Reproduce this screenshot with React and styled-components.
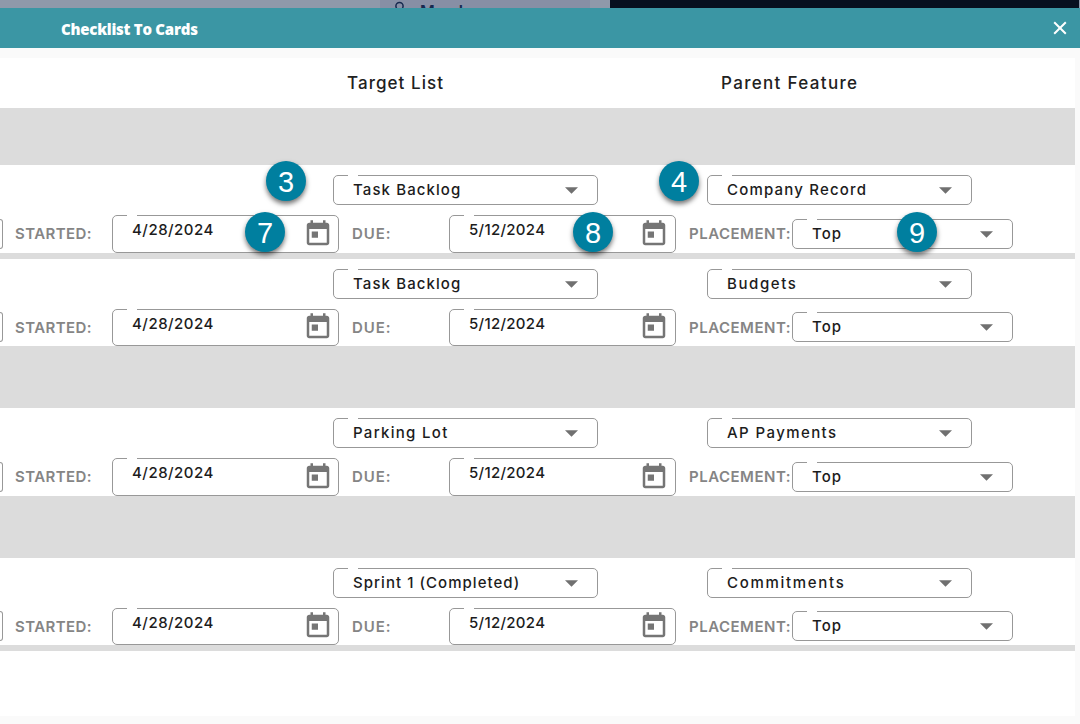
import React from 'react';
import styled, { createGlobalStyle } from 'styled-components';

const GlobalStyle = createGlobalStyle`
  * { box-sizing: border-box; }
  body {
    margin: 0;
    background: #fafafa;
    font-family: Inter, 'Liberation Sans', sans-serif;
    overflow: hidden;
  }
`;

const Page = styled.div`
  position: relative;
  width: 1080px;
  height: 724px;
  overflow: hidden;
  background: #fafafa;
`;

const Backdrop = styled.div`
  display: flex;
  height: 8px;
  overflow: hidden;
  background: #8f99aa;
`;

const BackdropTab = styled.div`
  display: flex;
  align-items: flex-start;
  width: 210px;
  height: 8px;
  margin-left: 380px;
  padding-left: 14px;
  overflow: hidden;
  background: #878fa5;
  color: #16294f;

  svg { flex: none; margin-top: 1px; }
`;

const BackdropLabel = styled.span`
  margin-left: 14px;
  font-size: 16px;
  line-height: 22px;
  font-weight: 600;
`;

const BackdropDark = styled.div`
  width: 469px;
  height: 8px;
  margin-left: 20px;
  background: #07101f;
`;

const TitleBar = styled.header`
  display: flex;
  align-items: center;
  justify-content: space-between;
  height: 40px;
  padding: 2px 13px 0 61px;
  background: #3b96a4;
  color: #fff;
`;

const Title = styled.h1`
  margin: 0;
  font: 800 15px/22px 'Open Sans', 'Noto Sans', sans-serif;
  letter-spacing: -0.25px;
`;

const CloseButton = styled.button`
  display: flex;
  width: 14px;
  height: 14px;
  margin-top: -2px;
  padding: 0;
  border: 0;
  background: none;
  color: inherit;
`;

const Panel = styled.main`
  width: 1075px;
  height: 658px;
  margin-top: 10px;
  background: #fff;
`;

const ColumnHeads = styled.div`
  display: flex;
  height: 50px;
  padding-left: 347px;
`;

const ColumnHead = styled.h2`
  flex: none;
  width: 374px;
  margin: 0;
  color: #212121;
  font-size: 17px;
  font-weight: 500;
  line-height: 50px;
  letter-spacing: ${(p) => p.$spacing}px;

  &:last-child { width: auto; }
`;

const Divider = styled.div`
  height: ${(p) => p.$height}px;
  background: #dcdcdc;
`;

const Row = styled.section`
  height: ${(p) => p.$height}px;
  padding-top: 10px;
`;

const TargetLine = styled.div`
  display: flex;
  gap: 109px;
  padding-left: 333px;
`;

const ScheduleLine = styled.div`
  display: flex;
  align-items: flex-start;
  height: ${(p) => p.$height}px;
  margin-top: 10px;
`;

const Outline = styled.div`
  position: relative;
  display: flex;
  flex: none;
  justify-content: space-between;
  border: 1px solid #989898;
  border-radius: 5px;
  color: #1c1c1c;
  font-size: 15px;
  font-weight: 500;
  white-space: nowrap;

  &::before {
    content: '';
    position: absolute;
    top: -1px;
    left: 14px;
    width: 10px;
    height: 1px;
    background: #fff;
  }
`;

const SelectBox = styled(Outline)`
  width: ${(p) => p.$width}px;
  height: 30px;
  padding: 0 19px;
  margin-top: ${(p) => p.$top || 0}px;
  line-height: 27px;

  svg { margin-top: 11px; }
`;

const DateBox = styled(Outline)`
  width: 227px;
  height: 100%;
  padding: 0 ${(p) => p.$inset}px 0 19px;
  line-height: 28px;

  svg { margin-top: ${(p) => p.$iconTop}px; }
`;

const Value = styled.span`
  letter-spacing: ${(p) => p.$spacing}px;
`;

const ClippedBox = styled.div`
  flex: none;
  width: 3px;
  height: 30px;
  margin-top: ${(p) => p.$top}px;
  border: 1px solid #989898;
  border-left: 0;
  border-radius: 0 5px 5px 0;
`;

const Label = styled.label`
  flex: none;
  width: ${(p) => p.$width}px;
  padding-left: ${(p) => p.$indent}px;
  color: #858585;
  font-size: 15px;
  font-weight: 600;
  line-height: 37px;
  letter-spacing: ${(p) => p.$spacing}px;
  white-space: nowrap;
`;

const Callout = styled.div`
  position: absolute;
  left: ${(p) => p.$x - 20}px;
  top: ${(p) => p.$y - 20}px;
  width: 40px;
  height: 40px;
  border-radius: 50%;
  background: #007f9f;
  box-shadow: 0 3px 5px rgba(0, 0, 0, 0.55);
  color: #fff;
  font: 400 29px/43px 'Liberation Sans', Arial, sans-serif;
  text-align: center;
`;

const Arrow = () => (
  <svg width="13" height="7" viewBox="0 0 13 7" fill="#707070">
    <path d="M0 .2h13L6.5 6.8z" />
  </svg>
);

const Calendar = () => (
  <svg width="30" height="30" viewBox="0 0 24 24" fill="#757575">
    <path d="M19 3h-1V1h-2v2H8V1H6v2H5c-1.11 0-1.99.9-1.99 2L3 19c0 1.1.89 2 2 2h14c1.1 0 2-.9 2-2V5c0-1.1-.9-2-2-2zm0 16H5V8h14v11zM7 10h5v5H7z" />
  </svg>
);

const Person = () => (
  <svg width="12" height="14" viewBox="0 0 12 14" fill="none" stroke="currentColor" strokeWidth="1.5">
    <circle cx="5.5" cy="5" r="3.6" />
    <path d="M1 14c0-4 2-5.2 4.5-5.2S10 10 10 14" />
  </svg>
);

function Select({ label, spacing, width, top }) {
  return (
    <SelectBox $width={width} $top={top}>
      <Value $spacing={spacing}>{label}</Value>
      <Arrow />
    </SelectBox>
  );
}

function DateField({ value, spacing, iconTop, inset }) {
  return (
    <DateBox $iconTop={iconTop} $inset={inset}>
      <Value $spacing={spacing}>{value}</Value>
      <Calendar />
    </DateBox>
  );
}

const rows = [
  { gap: 57, height: 88, list: ['Task Backlog', 1.1], feature: ['Company Record', 1.19] },
  { gap: 6, height: 87, list: ['Task Backlog', 1.1], feature: ['Budgets', 1.58] },
  { gap: 62, height: 88, list: ['Parking Lot', 1.3], feature: ['AP Payments', 1.41] },
  { gap: 62, height: 87, list: ['Sprint 1 (Completed)', 1.04], feature: ['Commitments', 1.7] },
];

const callouts = [
  { n: 3, x: 286, y: 181 },
  { n: 4, x: 679, y: 181 },
  { n: 7, x: 265, y: 232 },
  { n: 8, x: 593, y: 232 },
  { n: 9, x: 917, y: 232 },
];

function ChecklistRow({ height, list, feature }) {
  const lineHeight = height - 50;
  const boxTop = lineHeight - 34;
  const iconTop = lineHeight - 35;
  return (
    <Row $height={height}>
      <TargetLine>
        <Select label={list[0]} spacing={list[1]} width={265} />
        <Select label={feature[0]} spacing={feature[1]} width={265} />
      </TargetLine>
      <ScheduleLine $height={lineHeight}>
        <ClippedBox $top={boxTop} />
        <Label $width={109} $indent={12} $spacing={0.4}>STARTED:</Label>
        <DateField value="4/28/2024" spacing={0.5} iconTop={iconTop} inset={5} />
        <Label $width={110} $indent={13} $spacing={0.9}>DUE:</Label>
        <DateField value="5/12/2024" spacing={0.3} iconTop={iconTop} inset={6} />
        <Label $width={116} $indent={13} $spacing={0.5}>PLACEMENT:</Label>
        <Select label="Top" spacing={1.02} width={221} top={boxTop} />
      </ScheduleLine>
    </Row>
  );
}

export default function App() {
  return (
    <Page>
      <GlobalStyle />
      <Backdrop>
        <BackdropTab>
          <Person />
          <BackdropLabel>Members</BackdropLabel>
        </BackdropTab>
        <BackdropDark />
      </Backdrop>
      <TitleBar>
        <Title>Checklist To Cards</Title>
        <CloseButton aria-label="Close">
          <svg width="14" height="14" viewBox="0 0 14 14" stroke="currentColor" strokeWidth="2">
            <path d="M1.2 1.2l11.6 11.6M12.8 1.2L1.2 12.8" />
          </svg>
        </CloseButton>
      </TitleBar>
      <Panel>
        <ColumnHeads>
          <ColumnHead $spacing={1.06}>Target List</ColumnHead>
          <ColumnHead $spacing={1.33}>Parent Feature</ColumnHead>
        </ColumnHeads>
        {rows.map((row, i) => (
          <React.Fragment key={i}>
            <Divider $height={row.gap} />
            <ChecklistRow {...row} />
          </React.Fragment>
        ))}
        <Divider $height={6} />
      </Panel>
      {callouts.map((c) => (
        <Callout key={c.n} $x={c.x} $y={c.y}>{c.n}</Callout>
      ))}
    </Page>
  );
}
